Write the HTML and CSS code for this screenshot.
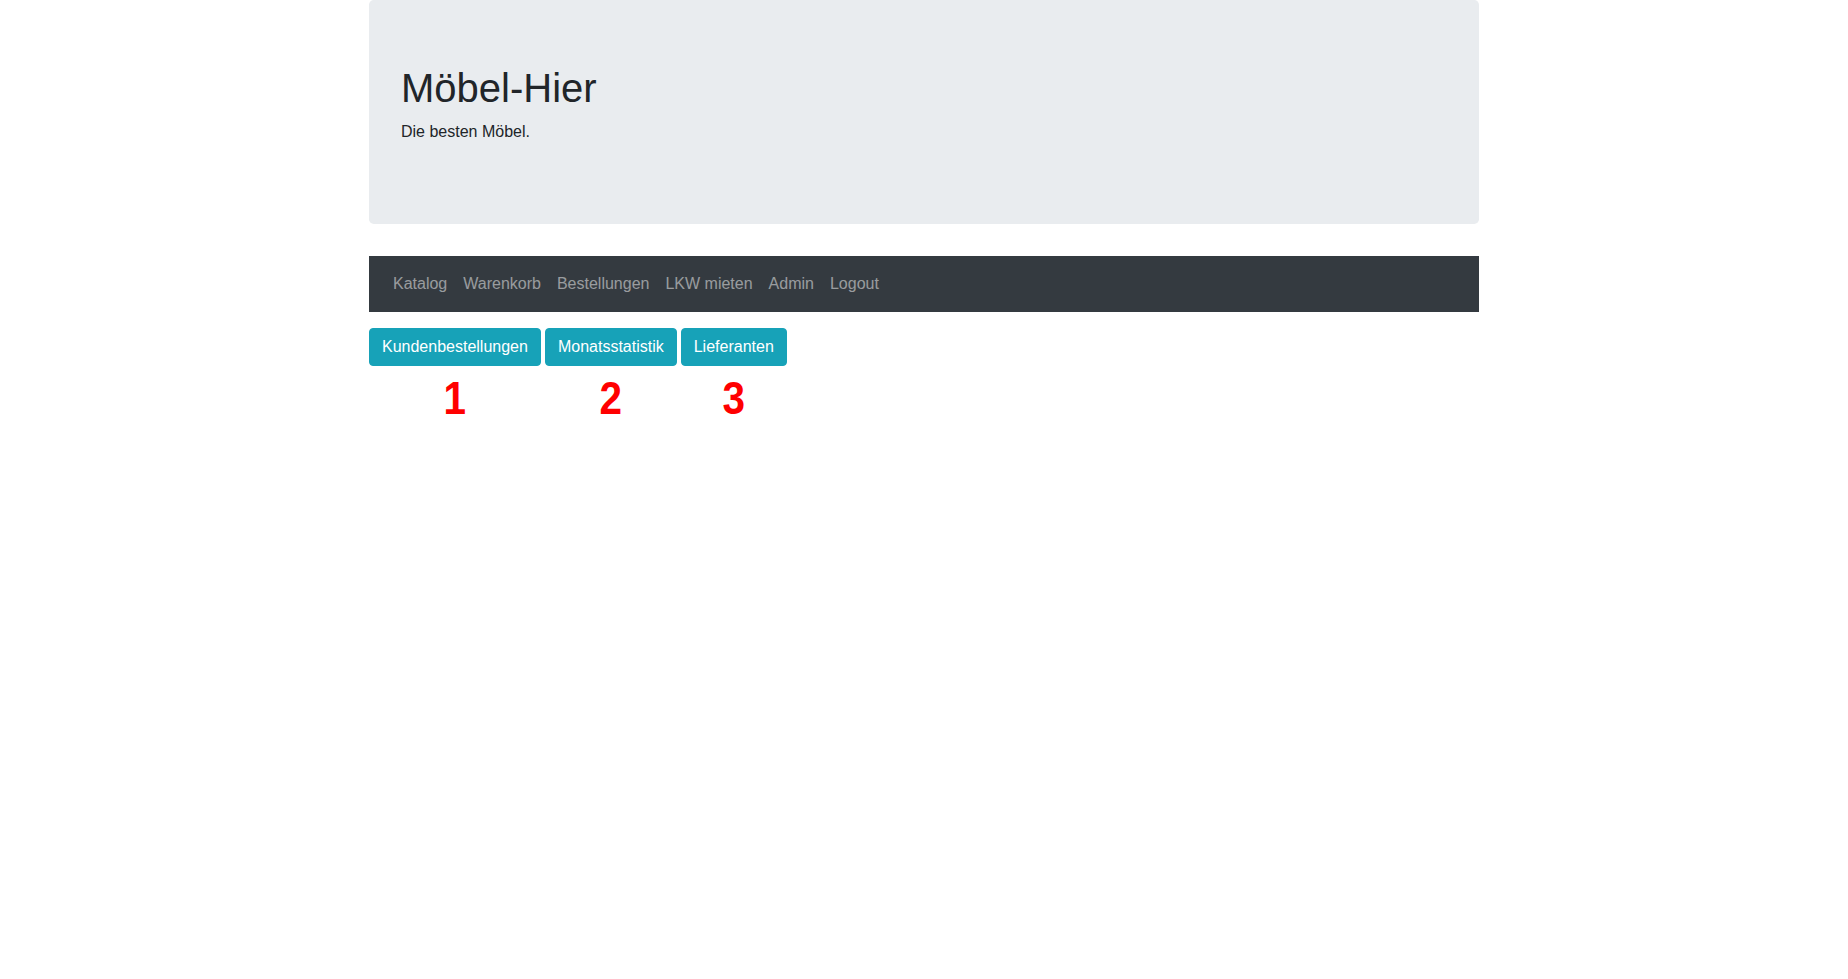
FILE: index.html
```html
<!DOCTYPE html>
<html lang="de">
<head>
<meta charset="utf-8">
<title>Möbel-Hier</title>
<link rel="stylesheet" href="styles.css">
</head>
<body>
<div class="container">
  <header class="jumbotron">
    <h1 class="title">Möbel-Hier</h1>
    <p class="lead">Die besten Möbel.</p>
  </header>
  <nav class="navbar">
    <a class="nav-link" href="#">Katalog</a>
    <a class="nav-link" href="#">Warenkorb</a>
    <a class="nav-link" href="#">Bestellungen</a>
    <a class="nav-link" href="#">LKW mieten</a>
    <a class="nav-link" href="#">Admin</a>
    <a class="nav-link" href="#">Logout</a>
  </nav>
  <div class="actions">
    <div class="action">
      <button class="btn">Kundenbestellungen</button>
      <span class="marker">1</span>
    </div>
    <div class="action">
      <button class="btn">Monatsstatistik</button>
      <span class="marker">2</span>
    </div>
    <div class="action">
      <button class="btn">Lieferanten</button>
      <span class="marker">3</span>
    </div>
  </div>
</div>
</body>
</html>
```
FILE: styles.css
```css
* { box-sizing: border-box; }
html, body {
  margin: 0;
  background: #fff;
  font-family: "Liberation Sans", Arial, sans-serif;
  font-size: 16px;
  line-height: 1.5;
  color: #212529;
}
.container {
  width: 1140px;
  margin: 0 auto;
  padding: 0 15px;
}
.jumbotron {
  background: #e9ecef;
  border-radius: 4.8px;
  padding: 64px 32px;
  margin-bottom: 32px;
}
.title {
  margin: 0 0 8px;
  font-size: 40px;
  font-weight: 400;
  line-height: 1.2;
}
.lead {
  margin: 0 0 16px;
  font-size: 16px;
}
.navbar {
  display: flex;
  align-items: center;
  background: #343a40;
  padding: 8px 16px;
  height: 56px;
}
.nav-link {
  display: block;
  padding: 8px;
  color: rgba(255, 255, 255, 0.5);
  text-decoration: none;
}
.actions {
  display: flex;
  gap: 4px;
  margin-top: 16px;
}
.action {
  display: flex;
  flex-direction: column;
  align-items: center;
}
.btn {
  font-family: inherit;
  font-size: 16px;
  line-height: 1.5;
  color: #fff;
  background: #17a2b8;
  border: 1px solid #17a2b8;
  border-radius: 4px;
  padding: 6px 12px;
  cursor: pointer;
}
.marker {
  display: inline-block;
  color: #ff0000;
  font-weight: 700;
  font-size: 46px;
  line-height: 1;
  margin-top: 9px;
  transform: scaleX(0.88);
}
```
